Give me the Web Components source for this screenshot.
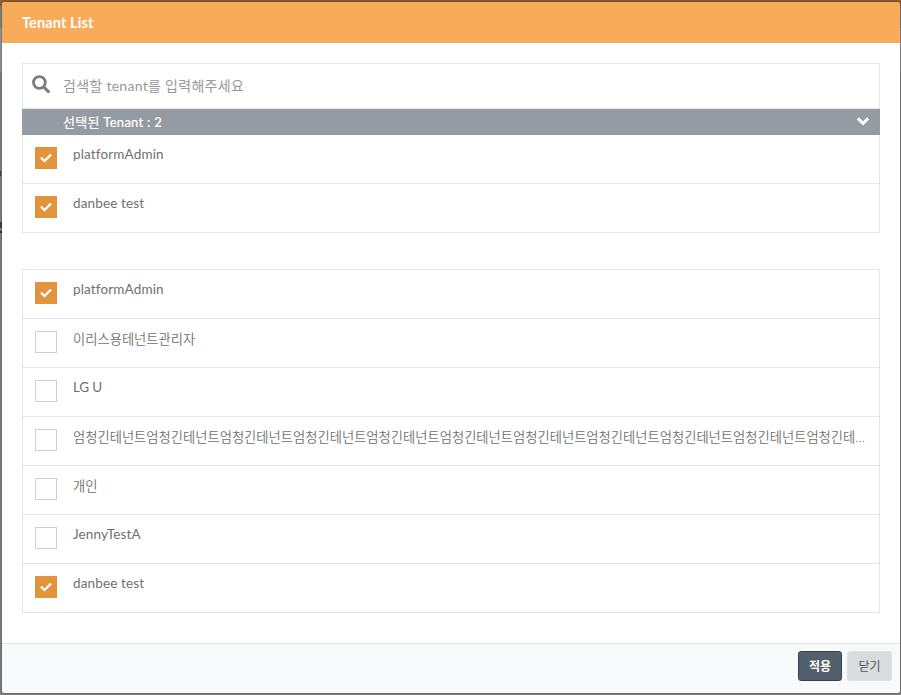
<!DOCTYPE html>
<html lang="ko"><head><meta charset="utf-8"><title>Tenant List</title>
<style>
html,body{margin:0;height:100%;overflow:hidden}
body{background:linear-gradient(#444,#444) 0 171px/1px 5px no-repeat,linear-gradient(#444,#444) 0 222px/2px 6px no-repeat,linear-gradient(#333,#333) 0 231px/2px 2px no-repeat,linear-gradient(#93602f 0 6px,#858585 6px 28px,#999 28px 72px,#858585 72px);font:13.5px Lato,"Noto Sans CJK KR",sans-serif;color:#707070}
</style></head><body>
<tenant-dialog>
<span slot="title">Tenant List</span>
<tenant-search>검색할 tenant를 입력해주세요</tenant-search>
<tenant-band>선택된 Tenant : 2</tenant-band>
<tenant-list class="joined">
<tenant-row checked style="--ls:.15px">platformAdmin</tenant-row>
<tenant-row checked style="--ls:.14px">danbee test</tenant-row>
</tenant-list>
<tenant-list class="all">
<tenant-row checked style="--ls:.15px">platformAdmin</tenant-row>
<tenant-row ko>이리스용테넌트관리자</tenant-row>
<tenant-row style="--ls:-.15px">LG U</tenant-row>
<tenant-row ko>엄청긴테넌트엄청긴테넌트엄청긴테넌트엄청긴테넌트엄청긴테넌트엄청긴테넌트엄청긴테넌트엄청긴테넌트엄청긴테넌트엄청긴테넌트엄청긴테넌트엄청긴테넌트</tenant-row>
<tenant-row ko>개인</tenant-row>
<tenant-row style="--ls:.12px">JennyTestA</tenant-row>
<tenant-row checked style="--ls:.14px">danbee test</tenant-row>
</tenant-list>
<tenant-button slot="actions" primary>적용</tenant-button>
<tenant-button slot="actions">닫기</tenant-button>
</tenant-dialog>
<script>
const define=(name,html)=>customElements.define(name,class extends HTMLElement{
  constructor(){super();this.attachShadow({mode:'open'}).innerHTML=html}
});
define('tenant-dialog',`<style>
:host{display:flex;flex-direction:column;box-sizing:border-box;width:898px;height:691px;margin:0 1px 0 2px;background:#fff;border-radius:3px;overflow:hidden;box-shadow:0 0 3px #0008}
:host{transform:translateY(2px)}
header{height:41px;flex:none;box-sizing:border-box;padding-left:20px;background:#f8ab59;color:#fff;font-size:14.5px;font-weight:700;line-height:41px;letter-spacing:.12px}
main{flex:1;padding:20px 20px 0}
footer{flex:none;height:50px;box-sizing:border-box;border-top:1px solid #e5e6e7;background:#f8f9fb;display:flex;justify-content:flex-end;gap:5px;padding:7px 8px 0}
</style><header><slot name="title"></slot></header><main><slot></slot></main><footer><slot name="actions"></slot></footer>`);
define('tenant-search',`<style>
:host{display:flex;box-sizing:border-box;height:46px;border:1px solid #e3e5e6;padding-left:9px;font-size:14px;color:#999;line-height:43px}
svg{width:18px;height:18px;margin:11px 13px 0 0;flex:none}
span{letter-spacing:.29px}
</style><svg viewBox="0 0 18 18" fill="none" stroke="#7c7c7c"><circle cx="7.4" cy="7.5" r="5.9" stroke-width="2.8"/><path d="M11.8 12 16.4 16.6" stroke-width="3" stroke-linecap="round"/></svg><span><slot></slot></span>`);
define('tenant-band',`<style>
:host{display:flex;justify-content:space-between;height:26px;background:#949ba3;color:#fff;padding:0 10px 0 41px;font-size:13px;line-height:26px}
span{letter-spacing:.28px;-webkit-text-stroke:.2px #fff}
svg{width:14px;height:9px;margin-top:8px}
</style><span><slot></slot></span><svg viewBox="0 0 14 9" fill="none" stroke="#fff" stroke-width="3.1"><path d="M1.8 1.4 7 6.3 12.2 1.4"/></svg>`);
define('tenant-list',`<style>
:host{display:block;border:1px solid #e3e5e6}
:host(.joined){border-top:0}
:host(.all){margin-top:36px}
::slotted(:not(:last-child)){border-bottom:1px solid #e3e5e6}
</style><slot></slot>`);
define('tenant-row',`<style>
:host{display:flex;height:48px}
i{box-sizing:border-box;width:22px;height:22px;margin:12px 16px 0 12px;flex:none;border:1px solid #d7cdd1;display:grid;place-items:center}
svg{display:none;width:12px;height:10px}
:host([checked]) i{background:#e2943d;border:0}
:host([checked]) svg{display:block}
span{flex:1;min-width:0;margin-right:12px;height:40px;line-height:39px;overflow:hidden;white-space:nowrap;text-overflow:ellipsis;letter-spacing:var(--ls,0)}
:host([ko]) span{font-size:13.3px;line-height:40px;font-weight:350;letter-spacing:-.01px}
</style><i><svg viewBox="0 0 12 10" fill="none" stroke="#fff" stroke-width="2.3"><path d="M1 4.7 4.5 8 11 1.7"/></svg></i><span><slot></slot></span>`);
define('tenant-button',`<style>
:host{box-sizing:border-box;width:45px;height:30px;border:1px solid #e1e2e4;border-radius:3px;background:#dadbdc;color:#4d5562;font-size:12px;line-height:29px;text-align:center}
:host([primary]){width:44px;background:#535f6b;border-color:#36424f;color:#fff;font-weight:700}
</style><slot></slot>`);
</script></body></html>
